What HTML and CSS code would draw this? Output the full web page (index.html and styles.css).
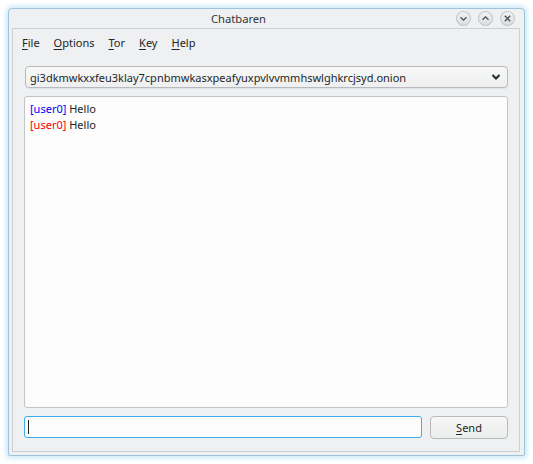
FILE: index.html
```html
<!DOCTYPE html>
<html>
<head>
<meta charset="utf-8">
<link rel="stylesheet" href="styles.css">
</head>
<body>
<div class="window">
  <div class="titlebar">
    <span class="title">Chatbaren</span>
    <div class="tbuttons">
      <span class="tbtn"><svg width="15" height="15" viewBox="0 0 15 15"><path d="M4.5 6.3 L7.5 9.2 L10.5 6.3" fill="none" stroke="#4d4f51" stroke-width="1.3"/></svg></span>
      <span class="tbtn"><svg width="15" height="15" viewBox="0 0 15 15"><path d="M4.5 8.7 L7.5 5.8 L10.5 8.7" fill="none" stroke="#4d4f51" stroke-width="1.3"/></svg></span>
      <span class="tbtn"><svg width="15" height="15" viewBox="0 0 15 15"><path d="M4.8 4.8 L10.2 10.2 M10.2 4.8 L4.8 10.2" fill="none" stroke="#4d4f51" stroke-width="1.3"/></svg></span>
    </div>
  </div>
  <div class="frame">
    <div class="menubar">
      <span class="mitem"><u>F</u>ile</span>
      <span class="mitem"><u>O</u>ptions</span>
      <span class="mitem"><u>T</u>or</span>
      <span class="mitem"><u>K</u>ey</span>
      <span class="mitem"><u>H</u>elp</span>
    </div>
    <div class="content">
      <div class="combo">
        <span class="combo-text">gi3dkmwkxxfeu3klay7cpnbmwkasxpeafyuxpvlvvmmhswlghkrcjsyd.onion</span>
        <svg class="chev" width="10" height="8" viewBox="0 0 10 8"><path d="M1.5 2 L5 5.5 L8.5 2" fill="none" stroke="#232627" stroke-width="2"/></svg>
      </div>
      <div class="log">
        <div class="line"><span class="nick-blue">[user0]</span> Hello</div>
        <div class="line"><span class="nick-red">[user0]</span> Hello</div>
      </div>
      <div class="inputrow">
        <div class="input"><span class="caret"></span></div>
        <div class="button"><u>S</u>end</div>
      </div>
    </div>
  </div>
</div>
</body>
</html>
```

FILE: styles.css
```css
html, body {
  margin: 0;
  padding: 0;
  background: #ffffff;
}
body {
  font-family: "Noto Sans", "DejaVu Sans", sans-serif;
  font-size: 11px;
  color: #232627;
  width: 533px;
  height: 464px;
  overflow: hidden;
}
.window {
  position: relative;
  margin: 8px 0 0 8px;
  width: 515px;
  height: 446px;
  border: 1px solid #9fc3da;
  border-radius: 4px 4px 2px 2px;
  background: #eff0f1;
  box-shadow: 0 0 5px 2px rgba(61, 174, 233, 0.28);
  display: flex;
  flex-direction: column;
}
.titlebar {
  height: 19px;
  display: flex;
  align-items: center;
  justify-content: center;
  position: relative;
  padding-right: 56px;
}
.title {
  font-size: 11.2px;
  color: #31363b;
}
.tbuttons {
  position: absolute;
  right: 9px;
  top: 2px;
  display: flex;
  gap: 7px;
}
.tbtn {
  width: 15px;
  height: 15px;
  border-radius: 50%;
  background: linear-gradient(#f4f5f5, #d8dadc);
  box-shadow: inset 0 0 0 1px #c4c6c8;
  display: flex;
}
.frame {
  flex: 1;
  margin: 0 4px 3px 3px;
  border: 1px solid #cdcfd1;
  display: flex;
  flex-direction: column;
}
.menubar {
  height: 26px;
  display: flex;
  align-items: center;
  padding-left: 9px;
  gap: 14px;
  box-sizing: border-box;
}
.mitem {
  color: #232627;
}
.mitem u {
  text-decoration-thickness: 1px;
  text-underline-offset: 2px;
}
.content {
  flex: 1;
  padding: 11px 11px 12px 11px;
  display: flex;
  flex-direction: column;
  gap: 8px;
}
.combo {
  height: 22px;
  margin-left: 1px;
  border: 1px solid #b8babc;
  border-radius: 4px;
  background: linear-gradient(#f7f7f7, #eeeff0);
  display: flex;
  align-items: center;
  padding: 0 6px 0 4px;
  box-sizing: border-box;
  box-shadow: 0 1px 1px rgba(0, 0, 0, 0.06);
}
.combo-text {
  flex: 1;
  white-space: nowrap;
  font-size: 11px;
}
.chev {
  display: block;
}
.log {
  flex: 1;
  border: 1px solid #c2c4c6;
  border-radius: 3px;
  background: #fcfcfc;
  padding: 4px 5px;
}
.line {
  line-height: 16px;
  height: 16px;
}
.nick-blue { color: #0000ff; }
.nick-red { color: #ff0000; }
.inputrow {
  display: flex;
  gap: 8px;
  height: 23px;
}
.input {
  flex: 1;
  height: 22px;
  box-sizing: border-box;
  border: 1px solid #3daee9;
  border-radius: 3px;
  background: #fcfcfc;
  display: flex;
  align-items: center;
  padding-left: 3px;
}
.caret {
  width: 1px;
  height: 14px;
  background: #232627;
}
.button {
  width: 78px;
  height: 23px;
  box-sizing: border-box;
  border: 1px solid #b8babc;
  border-radius: 4px;
  background: linear-gradient(#f6f6f6, #eceded);
  display: flex;
  align-items: center;
  justify-content: center;
}
.button u {
  text-underline-offset: 2px;
}
```
